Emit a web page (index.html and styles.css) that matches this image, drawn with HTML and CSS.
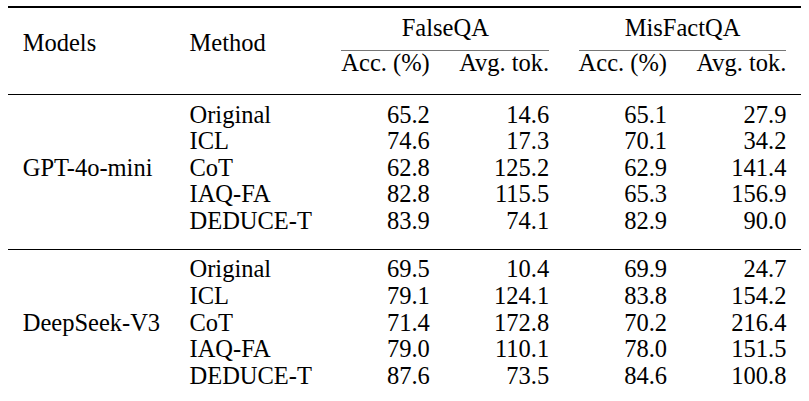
FILE: index.html
```html
<!DOCTYPE html>
<html lang="en">
<head>
<meta charset="utf-8">
<title>Results table</title>
<link rel="stylesheet" href="styles.css">
</head>
<body>
<table class="results">
  <thead>
    <tr class="head-top">
      <th class="stub" rowspan="2">Models</th>
      <th class="stub" rowspan="2">Method</th>
      <th class="group" colspan="2"><span class="group-label">FalseQA</span></th>
      <th class="group" colspan="2"><span class="group-label">MisFactQA</span></th>
    </tr>
    <tr class="head-sub">
      <th class="sub">Acc. (%)</th>
      <th class="sub">Avg. tok.</th>
      <th class="sub">Acc. (%)</th>
      <th class="sub">Avg. tok.</th>
    </tr>
  </thead>
  <tbody class="block ruled">
    <tr class="lead">
      <td class="model" rowspan="5">GPT-4o-mini</td>
      <td class="method">Original</td><td class="num">65.2</td><td class="num">14.6</td><td class="num">65.1</td><td class="num">27.9</td>
    </tr>
    <tr><td class="method">ICL</td><td class="num">74.6</td><td class="num">17.3</td><td class="num">70.1</td><td class="num">34.2</td></tr>
    <tr><td class="method">CoT</td><td class="num">62.8</td><td class="num">125.2</td><td class="num">62.9</td><td class="num">141.4</td></tr>
    <tr><td class="method">IAQ-FA</td><td class="num">82.8</td><td class="num">115.5</td><td class="num">65.3</td><td class="num">156.9</td></tr>
    <tr class="tail"><td class="method">DEDUCE-T</td><td class="num">83.9</td><td class="num">74.1</td><td class="num">82.9</td><td class="num">90.0</td></tr>
  </tbody>
  <tbody class="block">
    <tr class="lead">
      <td class="model" rowspan="5">DeepSeek-V3</td>
      <td class="method">Original</td><td class="num">69.5</td><td class="num">10.4</td><td class="num">69.9</td><td class="num">24.7</td>
    </tr>
    <tr><td class="method">ICL</td><td class="num">79.1</td><td class="num">124.1</td><td class="num">83.8</td><td class="num">154.2</td></tr>
    <tr><td class="method">CoT</td><td class="num">71.4</td><td class="num">172.8</td><td class="num">70.2</td><td class="num">216.4</td></tr>
    <tr><td class="method">IAQ-FA</td><td class="num">79.0</td><td class="num">110.1</td><td class="num">78.0</td><td class="num">151.5</td></tr>
    <tr class="tail"><td class="method">DEDUCE-T</td><td class="num">87.6</td><td class="num">73.5</td><td class="num">84.6</td><td class="num">100.8</td></tr>
  </tbody>
</table>
</body>
</html>
```

FILE: styles.css
```css
html, body {
  margin: 0;
  padding: 0;
  background: #ffffff;
}

.results {
  margin: 6px 0 0 8px;
  border-collapse: separate;
  border-spacing: 0;
  font-family: "Liberation Serif", "Times New Roman", serif;
  font-size: 24.5px;
  line-height: 20px;
  color: #000000;
}

.results th,
.results td {
  padding: 0 14.7px;
  font-weight: normal;
  white-space: nowrap;
  vertical-align: top;
}

/* header */
.head-top th {
  border-top: 2px solid #000000;
}

.stub {
  text-align: left;
  padding-top: 25.2px !important;
  border-bottom: 1px solid #000000;
}

.group {
  text-align: center;
  padding-top: 10.2px !important;
}

.group-label {
  display: block;
  padding-bottom: 11.8px;
  border-bottom: 1px solid #767676;
}

.sub {
  text-align: right;
  padding-top: 2.2px !important;
  padding-bottom: 20.8px !important;
  border-bottom: 1px solid #000000;
}

/* body */
.block td {
  padding-top: 3.3px;
  padding-bottom: 3.3px;
}

.block .lead td {
  padding-top: 9.6px;
}

.block .tail td {
  padding-bottom: 17.9px;
}

.ruled .tail td,
.ruled .model {
  border-bottom: 1px solid #000000;
}

.method {
  text-align: left;
}

.num {
  text-align: right;
}

.block td.model {
  text-align: left;
  padding-top: 62.8px;
  padding-bottom: 0;
}
```
